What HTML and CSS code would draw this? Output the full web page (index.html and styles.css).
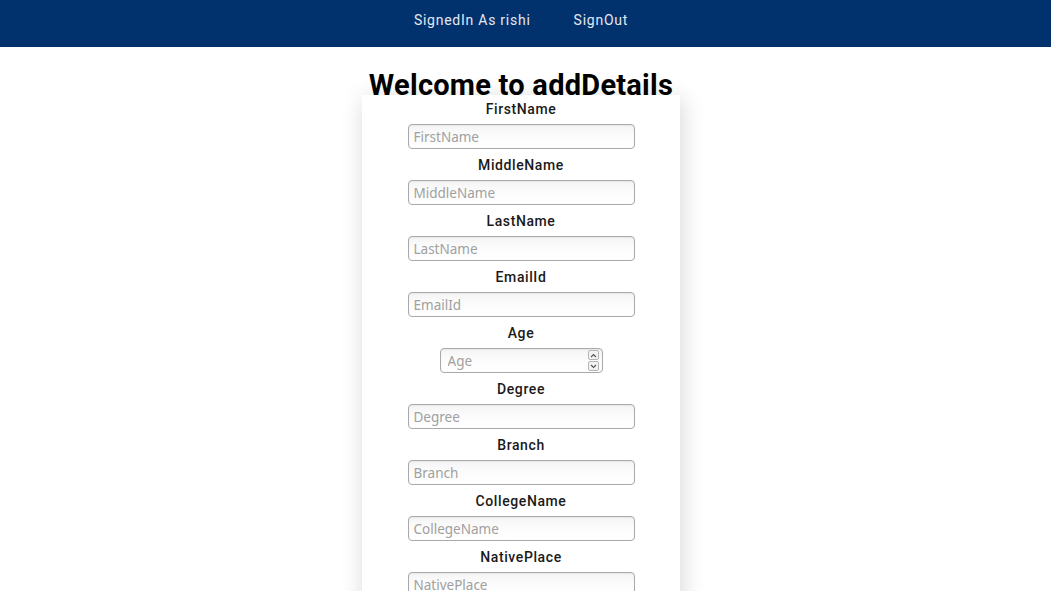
FILE: index.html
```html
<!DOCTYPE html>
<html>
<head>
<meta charset="utf-8">
<link rel="stylesheet" href="styles.css">
</head>
<body>
<nav class="topbar">
  <a class="nav-link">SignedIn As rishi</a>
  <a class="nav-link">SignOut</a>
</nav>
<main class="page">
  <h1 class="title">Welcome to addDetails</h1>
  <form class="card">
    <div class="field"><label class="label">FirstName</label><input class="input" type="text" placeholder="FirstName"></div>
    <div class="field"><label class="label">MiddleName</label><input class="input" type="text" placeholder="MiddleName"></div>
    <div class="field"><label class="label">LastName</label><input class="input" type="text" placeholder="LastName"></div>
    <div class="field"><label class="label">EmailId</label><input class="input" type="text" placeholder="EmailId"></div>
    <div class="field"><label class="label">Age</label>
      <div class="number-box">
        <input class="number-input" type="number" placeholder="Age">
        <span class="spinner">
          <span class="spin-btn"><svg width="7" height="5" viewBox="0 0 7 5"><path d="M1 4 L3.5 1.5 L6 4" fill="none" stroke="#555" stroke-width="1.1"/></svg></span>
          <span class="spin-btn"><svg width="7" height="5" viewBox="0 0 7 5"><path d="M1 1 L3.5 3.5 L6 1" fill="none" stroke="#555" stroke-width="1.1"/></svg></span>
        </span>
      </div>
    </div>
    <div class="field"><label class="label">Degree</label><input class="input" type="text" placeholder="Degree"></div>
    <div class="field"><label class="label">Branch</label><input class="input" type="text" placeholder="Branch"></div>
    <div class="field"><label class="label">CollegeName</label><input class="input" type="text" placeholder="CollegeName"></div>
    <div class="field"><label class="label">NativePlace</label><input class="input" type="text" placeholder="NativePlace"></div>
  </form>
</main>
</body>
</html>
```

FILE: styles.css
```css
html, body {
  margin: 0;
  padding: 0;
  background: #fff;
  font-family: Roboto, "Liberation Sans", sans-serif;
}
body {
  padding-right: 9px;
}
.topbar {
  height: 47px;
  margin-right: -9px;
  padding-right: 9px;
  background: #01326e;
  display: flex;
  justify-content: center;
  align-items: center;
  gap: 43px;
}
.nav-link {
  color: #e3e8f0;
  font-size: 14px;
  letter-spacing: 0.75px;
  font-weight: 400;
  padding-bottom: 8px;
}
.page {
  display: flex;
  flex-direction: column;
  align-items: center;
}
.title {
  margin: 24px 0 0 0;
  font-size: 29px;
  line-height: 29px;
  font-weight: 700;
  color: #000;
  letter-spacing: 0.25px;
  position: relative;
  z-index: 1;
}
.card {
  margin-top: -5px;
  width: 318px;
  background: #fff;
  box-shadow: 2px 4px 22px rgba(0,0,0,0.16);
  display: flex;
  flex-direction: column;
  align-items: center;
  padding-top: 6px;
  padding-bottom: 40px;
}
.field {
  display: flex;
  flex-direction: column;
  align-items: center;
  height: 56px;
}
.label {
  font-size: 14px;
  line-height: 16px;
  font-weight: 500;
  letter-spacing: 0.6px;
  color: #1a1a1a;
  margin-bottom: 7px;
}
.input, .number-box {
  box-sizing: border-box;
  height: 25px;
  border: 1px solid #a9a9a9;
  border-radius: 4px;
  background: linear-gradient(#f4f4f4, #fbfbfb 40%, #fff);
  box-shadow: inset 0 1px 2px rgba(0,0,0,0.06);
}
.input {
  width: 227px;
  padding: 0 5px;
  font-family: "Noto Sans", "Open Sans", sans-serif;
  font-size: 13.5px;
  color: #333;
  outline: none;
}
.input::placeholder, .number-input::placeholder {
  color: #a0a0a0;
}
.number-box {
  width: 163px;
  display: flex;
  align-items: center;
  padding: 0 3px 0 7px;
}
.number-input {
  flex: 1;
  min-width: 0;
  border: none;
  background: transparent;
  font-family: "Noto Sans", "Open Sans", sans-serif;
  font-size: 13.5px;
  padding: 0;
  outline: none;
  -moz-appearance: textfield;
}
.number-input::-webkit-inner-spin-button,
.number-input::-webkit-outer-spin-button {
  -webkit-appearance: none;
  margin: 0;
}
.spinner {
  display: flex;
  flex-direction: column;
  gap: 1px;
}
.spin-btn {
  box-sizing: border-box;
  width: 11px;
  height: 10px;
  border: 1px solid #b5b5b5;
  border-radius: 2px;
  background: #f3f3f3;
  display: flex;
  align-items: center;
  justify-content: center;
}
```
